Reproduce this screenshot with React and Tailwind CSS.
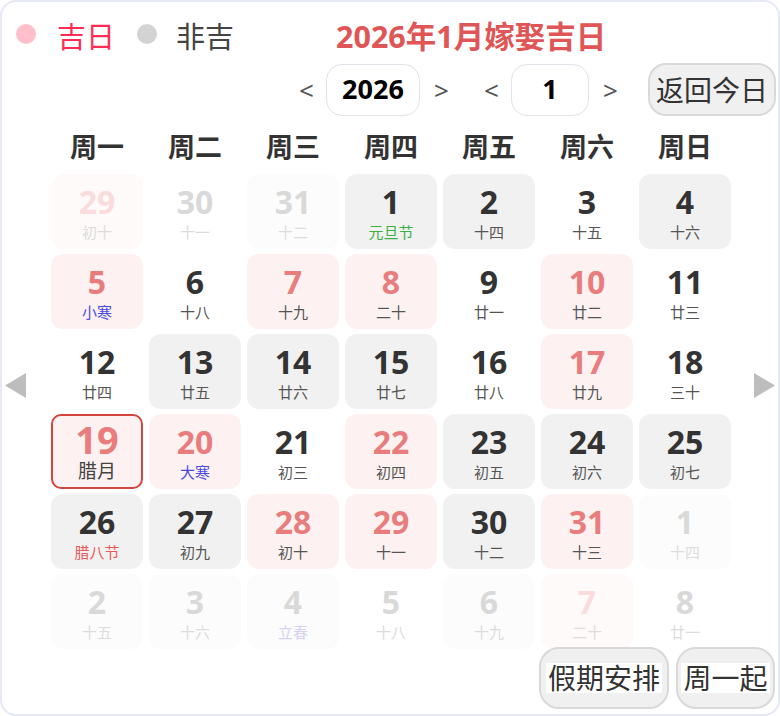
import React from "react";

const FONT = { fontFamily: '"Noto Sans", "Noto Sans CJK SC", sans-serif' };

const weekDays = ["周一", "周二", "周三", "周四", "周五", "周六", "周日"];

// t: g = 吉日, b = 非吉, n = none; o* = other month; lc = lunar color
const days = [
  { d: 29, l: "初十", t: "og" },
  { d: 30, l: "十一", t: "on" },
  { d: 31, l: "十二", t: "ob" },
  { d: 1, l: "元旦节", t: "b", lc: "green" },
  { d: 2, l: "十四", t: "b" },
  { d: 3, l: "十五", t: "n" },
  { d: 4, l: "十六", t: "b" },

  { d: 5, l: "小寒", t: "g", lc: "blue" },
  { d: 6, l: "十八", t: "n" },
  { d: 7, l: "十九", t: "g" },
  { d: 8, l: "二十", t: "g" },
  { d: 9, l: "廿一", t: "n" },
  { d: 10, l: "廿二", t: "g" },
  { d: 11, l: "廿三", t: "n" },

  { d: 12, l: "廿四", t: "n" },
  { d: 13, l: "廿五", t: "b" },
  { d: 14, l: "廿六", t: "b" },
  { d: 15, l: "廿七", t: "b" },
  { d: 16, l: "廿八", t: "n" },
  { d: 17, l: "廿九", t: "g" },
  { d: 18, l: "三十", t: "n" },

  { d: 19, l: "腊月", t: "g", today: true },
  { d: 20, l: "大寒", t: "g", lc: "blue" },
  { d: 21, l: "初三", t: "n" },
  { d: 22, l: "初四", t: "g" },
  { d: 23, l: "初五", t: "b" },
  { d: 24, l: "初六", t: "b" },
  { d: 25, l: "初七", t: "b" },

  { d: 26, l: "腊八节", t: "b", lc: "red" },
  { d: 27, l: "初九", t: "b" },
  { d: 28, l: "初十", t: "g" },
  { d: 29, l: "十一", t: "g" },
  { d: 30, l: "十二", t: "b" },
  { d: 31, l: "十三", t: "g" },
  { d: 1, l: "十四", t: "ob" },

  { d: 2, l: "十五", t: "ob" },
  { d: 3, l: "十六", t: "ob" },
  { d: 4, l: "立春", t: "ob", lc: "fadeblue" },
  { d: 5, l: "十八", t: "on" },
  { d: 6, l: "十九", t: "ob" },
  { d: 7, l: "二十", t: "og" },
  { d: 8, l: "廿一", t: "on" },
];

const cellBg = {
  g: "bg-[#fdf2f1]",
  b: "bg-[#f1f1f1]",
  n: "bg-white",
  og: "bg-[#fefafa]",
  ob: "bg-[#fcfcfc]",
  on: "bg-white",
};

const numColor = {
  g: "text-[#e97c7c]",
  b: "text-[#333333]",
  n: "text-[#333333]",
  og: "text-[#fadcdc]",
  ob: "text-[#d9d9d9]",
  on: "text-[#d9d9d9]",
};

const lunarColor = {
  green: "text-[#3cb043]",
  blue: "text-[#4b4bdc]",
  red: "text-[#e85a5a]",
  fadeblue: "text-[#d6d2f5]",
};

function DayCell({ day }) {
  const outside = day.t.startsWith("o");
  const lc = day.lc
    ? lunarColor[day.lc]
    : outside
    ? "text-[#dcdcdc]"
    : "text-[#555555]";

  if (day.today) {
    return (
      <div className="h-[75px] rounded-[10px] border-2 border-[#d4453f] bg-[#fdf2f1] flex flex-col items-center pt-[4px]">
        <span className="text-[38px] font-bold leading-[38px] text-[#e97c7c]">{day.d}</span>
        <span className="text-[19px] leading-[22px] mt-[2px] text-[#444444]">{day.l}</span>
      </div>
    );
  }

  return (
    <div className={`h-[75px] rounded-[12px] flex flex-col items-center pt-[9px] ${cellBg[day.t]}`}>
      <span className={`text-[32px] font-bold leading-[38px] ${numColor[day.t]}`}>{day.d}</span>
      <span className={`text-[15px] leading-[20px] mt-[1px] ${lc}`}>{day.l}</span>
    </div>
  );
}

function Triangle({ dir }) {
  return (
    <svg width="21" height="25" viewBox="0 0 21 25">
      {dir === "left" ? (
        <polygon points="0,12.5 21,0 21,25" fill="#bdbdbd" />
      ) : (
        <polygon points="21,12.5 0,0 0,25" fill="#bdbdbd" />
      )}
    </svg>
  );
}

export default function App() {
  return (
    <div
      style={FONT}
      className="w-[780px] h-[716px] box-border border-2 border-[#e6e8f5] rounded-[16px] bg-white flex flex-col overflow-hidden"
    >
      {/* legend + title */}
      <div className="mt-[12px] h-[44px] flex items-center pl-[14px]">
        <span className="w-[20px] h-[20px] rounded-full bg-[#ffc0cb] -mt-[4px]" />
        <span className="ml-[21px] text-[29px] leading-none text-[#ff2d55]">吉日</span>
        <span className="ml-[22px] w-[20px] h-[20px] rounded-full bg-[#d3d3d3] -mt-[4px]" />
        <span className="ml-[19px] text-[29px] leading-none text-[#444444]">非吉</span>
        <span className="ml-[102px] text-[30.5px] font-bold leading-none text-[#e05555]">
          2026年1月嫁娶吉日
        </span>
      </div>

      {/* year / month selectors */}
      <div className="mt-[5px] h-[53px] flex items-center justify-end pr-[2px]">
        <span className="w-[14px] text-center text-[26px] leading-none text-[#555555]">&lt;</span>
        <div className="ml-[13px] w-[94px] h-[52px] rounded-[16px] border-[1.5px] border-[#e2e2ea] flex items-center justify-center text-[27px] font-bold text-black">
          2026
        </div>
        <span className="ml-[14px] w-[14px] text-center text-[26px] leading-none text-[#555555]">&gt;</span>
        <span className="ml-[36px] w-[14px] text-center text-[26px] leading-none text-[#555555]">&lt;</span>
        <div className="ml-[13px] w-[78px] h-[52px] rounded-[16px] border-[1.5px] border-[#e2e2ea] flex items-center justify-center text-[27px] font-bold text-black">
          1
        </div>
        <span className="ml-[14px] w-[14px] text-center text-[26px] leading-none text-[#555555]">&gt;</span>
        <button className="ml-[31px] w-[128px] h-[53px] rounded-[18px] border-2 border-[#d9d9d9] bg-[#f0f0f0] text-[28px] leading-none text-[#333333]">
          返回今日
        </button>
      </div>

      {/* weekday header */}
      <div className="mt-[11px] h-[34px] pl-[49px] grid grid-cols-[repeat(7,92px)] gap-x-[6px]">
        {weekDays.map((w) => (
          <div key={w} className="flex items-center justify-center text-[27px] font-bold text-[#333333]">
            {w}
          </div>
        ))}
      </div>

      {/* calendar grid with side arrows */}
      <div className="mt-[13px] flex">
        <div className="w-[49px] pl-[3px] pt-[199px]">
          <Triangle dir="left" />
        </div>
        <div className="w-[680px] grid grid-cols-[repeat(7,92px)] grid-rows-[repeat(6,75px)] gap-x-[6px] gap-y-[5px]">
          {days.map((day, i) => (
            <DayCell key={i} day={day} />
          ))}
        </div>
        <div className="flex-1 pl-[23px] pt-[199px]">
          <Triangle dir="right" />
        </div>
      </div>

      {/* bottom buttons */}
      <div className="-mt-[2px] h-[62px] flex justify-end gap-[7px] pr-[3px]">
        <button className="w-[130px] h-[62px] rounded-[20px] border-2 border-[#d9d9d9] bg-[#f0f0f0] flex items-center justify-center">
          <span className="bg-white text-[28px] leading-[30px] text-[#333333] px-[2px]">假期安排</span>
        </button>
        <button className="w-[99px] h-[62px] rounded-[20px] border-2 border-[#d9d9d9] bg-[#f0f0f0] flex items-center justify-center">
          <span className="bg-white text-[28px] leading-[30px] text-[#333333] px-[2px]">周一起</span>
        </button>
      </div>
    </div>
  );
}
